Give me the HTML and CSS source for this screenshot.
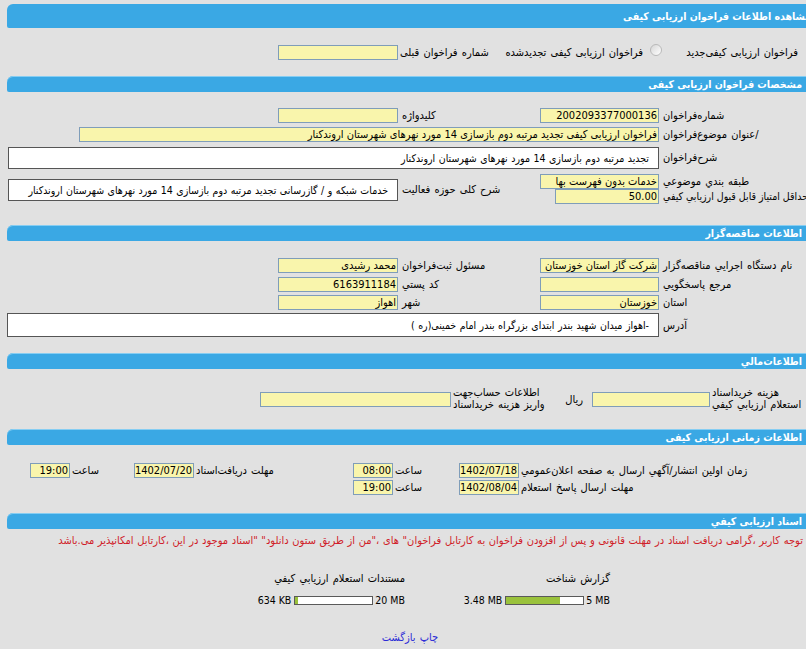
FILE: index.html
```html
<!DOCTYPE html>
<html lang="fa">
<head>
<meta charset="utf-8">
<title>مشاهده اطلاعات فراخوان ارزيابی کيفی</title>
<link rel="stylesheet" href="styles.css">
</head>
<body>
<div class="frame">
<div class="page">

  <div class="bar bar-title">مشاهده اطلاعات فراخوان ارزيابی کيفی</div>
  <div class="sec s1">
    <div class="row type-row">
      <div class="opt o1"><span class="radio on"></span><span class="opt-t">فراخوان ارزيابی کيفی‌جديد</span></div>
      <div class="opt o2"><span class="radio"></span><span class="opt-t">فراخوان ارزيابی کيفی تجديدشده</span></div>
      <div class="lbl l-prev">شماره فراخوان قبلی</div>
      <span class="fld w120"></span>
    </div>
  </div>

  <div class="bar">مشخصات فراخوان ارزيابی کيفی</div>
  <div class="sec s2">
    <div class="grid g2">
      <div class="lbl">شماره‌فراخوان</div>
      <div class="cell"><span class="fld w119">2002093377000136</span></div>
      <div class="lbl">کليدواژه</div>
      <div class="cell"><span class="fld w120"></span></div>

      <div class="lbl">/عنوان موضوع‌فراخوان</div>
      <div class="cell span3"><span class="fld w580">فراخوان ارزيابی کيفی تجديد مرتبه دوم بازسازی 14 مورد نهرهای شهرستان اروندکنار</span></div>

      <div class="lbl lbl-box">شرح‌فراخوان</div>
      <div class="cell span3"><div class="box w651">تجديد مرتبه دوم بازسازی 14 مورد نهرهای شهرستان اروندکنار</div></div>

      <div class="lbl">طبقه بندي موضوعي</div>
      <div class="cell"><span class="fld w119">خدمات بدون فهرست بها</span></div>
      <div class="lbl rs2 lbl-side">شرح کلی حوزه فعاليت</div>
      <div class="cell rs2"><div class="box w390">خدمات شبکه و / گازرسانی تجديد مرتبه دوم بازسازی 14 مورد نهرهای شهرستان اروندکنار</div></div>

      <div class="lbl lbl-long">حداقل امتياز قابل قبول ارزيابي کيفي</div>
      <div class="cell"><span class="fld w104">50.00</span></div>
    </div>
  </div>

  <div class="bar">اطلاعات مناقصه‌گزار</div>
  <div class="sec s3">
    <div class="grid g3">
      <div class="lbl">نام دستگاه اجرايي مناقصه‌گزار</div>
      <div class="cell"><span class="fld w119">شرکت گاز استان خوزستان</span></div>
      <div class="lbl">مسئول ثبت‌فراخوان</div>
      <div class="cell"><span class="fld w120">محمد رشيدی</span></div>

      <div class="lbl">مرجع پاسخگويي</div>
      <div class="cell"><span class="fld w119"></span></div>
      <div class="lbl">کد پستي</div>
      <div class="cell"><span class="fld w120">6163911184</span></div>

      <div class="lbl">استان</div>
      <div class="cell"><span class="fld w119">خوزستان</span></div>
      <div class="lbl">شهر</div>
      <div class="cell"><span class="fld w120">اهواز</span></div>

      <div class="lbl lbl-addr">آدرس</div>
      <div class="cell span3"><div class="box addr w652">-اهواز ميدان شهيد بندر ابتدای بزرگراه بندر امام خمينی(ره )</div></div>
    </div>
  </div>

  <div class="bar">اطلاعات‌مالي</div>
  <div class="sec s4">
    <div class="row fin-row">
      <div class="lbl l-fin1">هزينه خريداسناد<br>استعلام ارزيابي کيفي</div>
      <span class="fld w118"></span>
      <div class="ryal">ريال</div>
      <div class="lbl l-fin2">اطلاعات حساب‌جهت<br>واريز هزينه خريداسناد</div>
      <span class="fld w191"></span>
    </div>
  </div>

  <div class="bar">اطلاعات زمانی ارزيابی کيفی</div>
  <div class="sec s5">
    <div class="row t-row">
      <div class="lbl l-t1">زمان اولين انتشار/آگهي ارسال به صفحه اعلان‌عمومي</div>
      <span class="fld w60">1402/07/18</span>
      <div class="lbl l-t2">ساعت</div>
      <span class="fld w40">08:00</span>
      <div class="lbl l-t3">مهلت دريافت‌اسناد</div>
      <span class="fld w60">1402/07/20</span>
      <div class="lbl l-t4">ساعت</div>
      <span class="fld w40">19:00</span>
    </div>
    <div class="row t-row">
      <div class="lbl l-t1">مهلت ارسال پاسخ استعلام</div>
      <span class="fld w60">1402/08/04</span>
      <div class="lbl l-t2">ساعت</div>
      <span class="fld w40">19:00</span>
    </div>
  </div>

  <div class="bar">اسناد ارزيابی کيفي</div>
  <div class="sec s6">
    <div class="note">توجه کاربر ،گرامی دريافت اسناد در مهلت قانونی و پس از افزودن فراخوان به کارتابل فراخوان" های ،"من از طريق ستون دانلود" "اسناد موجود در اين ،کارتابل امکانپذير می.باشد</div>
    <div class="docs">
      <div class="doc">
        <div class="doc-t">گزارش شناخت</div>
        <div class="meter"><span class="m-used">3.48 MB</span><span class="track"><span class="fill" style="width:69.6%"></span></span><span class="m-max">5 MB</span></div>
      </div>
      <div class="doc">
        <div class="doc-t">مستندات استعلام ارزيابي کيفي</div>
        <div class="meter"><span class="m-used">634 KB</span><span class="track"><span class="fill" style="width:3.1%"></span></span><span class="m-max">20 MB</span></div>
      </div>
    </div>
    <div class="links"><a href="#" class="lnk">چاپ</a> <a href="#" class="lnk">بازگشت</a></div>
  </div>

</div>
</div>
</body>
</html>
```
FILE: styles.css
```css
html, body {
  margin: 0;
  padding: 0;
  background: #e1e1e1;
}
body {
  font-family: Tahoma, "DejaVu Sans Condensed", "DejaVu Sans", sans-serif;
  font-size: 11px;
  word-spacing: 1px;
  color: #000;
}
.frame {
  width: 806px;
  overflow: hidden;
}
.page {
  margin: 4px 0 0 7px;
  width: 806px;
  direction: rtl;
}

/* section header bars */
.bar {
  height: 16px;
  line-height: 16px;
  background: #3aa8e4;
  color: #fff;
  font-weight: bold;
  font-size: 10.5px;
  word-spacing: 0;
  padding-right: 11px;
  border-top-left-radius: 6px;
  border-bottom-left-radius: 2px;
  box-shadow: inset 0 1px 0 #86cdf2;
  white-space: nowrap;
  overflow: hidden;
}
.bar-title {
  height: 24px;
  line-height: 25px;
  padding-right: 2px;
  box-shadow: none;
}

/* sections */
.s1 { padding: 17px 0 16px; }
.s2 { padding: 16px 0 20px; }
.s3 { padding: 17px 0 16px; }
.s4 { padding: 16px 0 16px; }
.s5 { padding: 18px 0 16px; }
.s6 { padding: 5px 0 0; }

.row {
  display: flex;
  align-items: center;
}

.lbl {
  white-space: nowrap;
  text-align: left;
  line-height: 15px;
  box-sizing: border-box;
}
.lbl-long {
  direction: ltr;
  word-spacing: 0;
  font-size: 10.5px;
}

/* input look */
.fld {
  display: block;
  box-sizing: border-box;
  height: 15px;
  line-height: 13px;
  border: 1px solid #7f9db9;
  background: #f9f5ac;
  padding: 0 1px;
  margin-right: 2px;
  white-space: nowrap;
  overflow: hidden;
  text-align: right;
  flex: none;
  word-spacing: 0;
}
.w40 { width: 40px; }
.w60 { width: 60px; }
.w104 { width: 104px; }
.w118 { width: 118px; }
.w119 { width: 119px; }
.w120 { width: 120px; }
.w191 { width: 191px; }
.w580 { width: 580px; }

.box {
  box-sizing: border-box;
  height: 22px;
  line-height: 20px;
  border: 1px solid #555;
  background: #fff;
  padding: 0 9px;
  margin-right: 2px;
  white-space: nowrap;
  overflow: hidden;
  font-size: 10.5px;
  word-spacing: 0.5px;
}
.w390 { width: 390px; }
.w651 { width: 651px; }
.w652 { width: 652px; margin-right: 2px; }
.addr { height: 24px; line-height: 22px; }

/* section 1 */
.type-row { height: 15px; }
.opt {
  display: flex;
  align-items: center;
  flex: none;
  white-space: nowrap;
}
.o1 { width: 151px; }
.o2 { width: 152px; }
.radio {
  width: 12px;
  height: 12px;
  box-sizing: border-box;
  border-radius: 50%;
  border: 1px solid #b9b9b9;
  background: linear-gradient(135deg, #d6d6d6, #ffffff);
  margin-top: -5px;
  flex: none;
}
.o1 .radio {
  margin-right: -9px;
}
.radio.on {
  background: radial-gradient(circle, #444 0 2px, #f4f4f4 3px);
}
.o1 .opt-t { margin-right: 12px; }
.o2 .opt-t { margin-right: 7px; }
.l-prev { width: 110px; flex: none; }

/* grids */
.grid {
  display: grid;
  grid-template-columns: 152px 123px 138px 1fr;
}
.g2 { grid-template-rows: 19px 20px 27px 15px 16px; }
.g3 { grid-template-rows: 19px 18px 18px 24px; }
.grid .lbl { padding-left: 2px; }
.cell {
  display: flex;
  align-items: flex-start;
}
.span3 { grid-column: span 3; }
.rs2 {
  grid-row: span 2;
  align-self: center;
}
.lbl-side {
  justify-self: stretch;
  text-align: left;
  padding-left: 1px;
}
.lbl-box { line-height: 22px; }
.lbl-addr { line-height: 26px; }

/* section 4 */
.fin-row { height: 28px; }
.l-fin1 {
  width: 101px;
  line-height: 12px;
  flex: none;
}
.ryal {
  width: 32px;
  box-sizing: border-box;
  padding-right: 9px;
  text-align: right;
  flex: none;
}
.l-fin2 {
  width: 107px;
  line-height: 12px;
  flex: none;
}

/* section 5 */
.t-row {
  height: 17px;
  align-items: flex-start;
}
.l-t1 { width: 292px; flex: none; }
.l-t2 { width: 64px; flex: none; }
.l-t3 { width: 157px; flex: none; }
.l-t4 { width: 62px; flex: none; }

/* section 6 */
.note {
  color: #d01c28;
  font-size: 11px;
  word-spacing: 0.5px;
  line-height: 13px;
  padding-right: 10px;
  white-space: nowrap;
}
.docs {
  display: flex;
  justify-content: center;
  margin-top: 25px;
}
.doc {
  width: 205px;
  box-sizing: border-box;
  padding-right: 5px;
  text-align: right;
}
.doc-t { line-height: 13px; }
.meter {
  direction: ltr;
  display: flex;
  justify-content: flex-end;
  align-items: center;
  height: 14px;
  margin-top: 8px;
  word-spacing: 0;
  font-size: 10.5px;
}
.track {
  width: 79px;
  height: 9px;
  box-sizing: border-box;
  border: 1px solid #5a5a5a;
  background: #fff;
  margin: 0 2px 0 3px;
  display: flex;
}
.fill {
  display: block;
  height: 100%;
  background: #9ac23c;
}
.links {
  text-align: center;
  margin-top: 24px;
  line-height: 13px;
}
.lnk {
  color: #2a2ad6;
  text-decoration: none;
}
```
